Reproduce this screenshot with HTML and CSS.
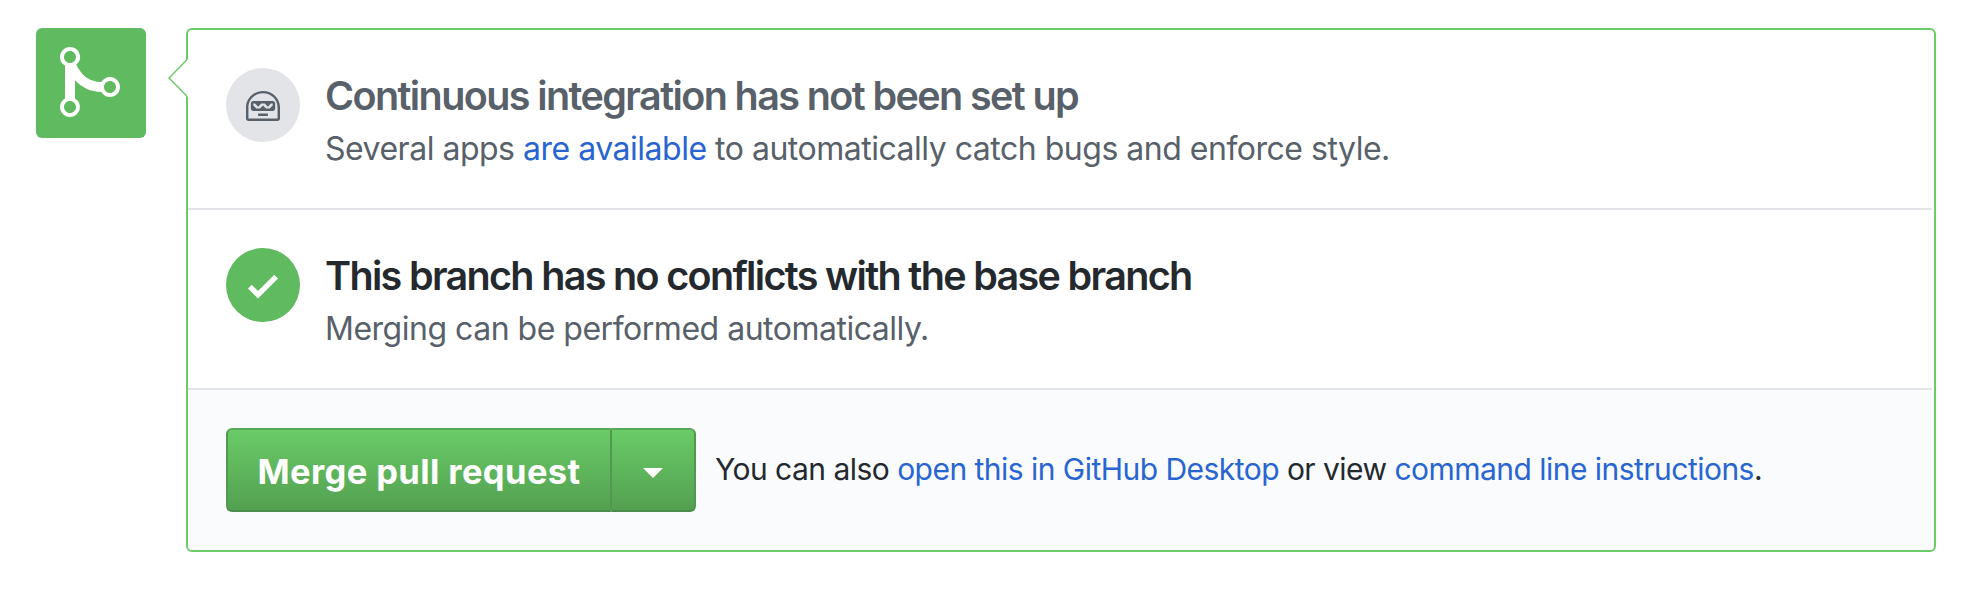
FILE: index.html
```html
<!DOCTYPE html>
<html lang="en">
<head>
<meta charset="utf-8">
<title>Merge pull request</title>
<link rel="stylesheet" href="styles.css">
</head>
<body>
<main class="merge">
  <div class="badge">
    <svg width="60" height="80" viewBox="0 0 12 16" fill="currentColor"><path d="M10 7c-.73 0-1.38.41-1.73 1.02V8C7.22 7.98 6 7.64 5.14 6.98c-.75-.58-1.5-1.61-1.89-2.44A1.993 1.993 0 0 0 2 .99C.89.99 0 1.89 0 3a2 2 0 0 0 1 1.72v6.56c-.59.35-1 .99-1 1.72 0 1.11.89 2 2 2a1.993 1.993 0 0 0 1-3.72V7.67c.67.7 1.44 1.27 2.3 1.69.86.42 2.03.63 2.97.64v-.02c.36.61 1 1.02 1.73 1.02 1.11 0 2-.89 2-2 0-1.11-.89-2-2-2zm-6.8 6c0 .66-.55 1.2-1.2 1.2-.65 0-1.2-.55-1.2-1.2 0-.65.55-1.2 1.2-1.2.65 0 1.2.55 1.2 1.2zM2 4.2C1.34 4.2.8 3.65.8 3c0-.65.55-1.2 1.2-1.2.65 0 1.2.55 1.2 1.2 0 .65-.55 1.2-1.2 1.2zm8 6c-.66 0-1.2-.55-1.2-1.2 0-.65.55-1.2 1.2-1.2.65 0 1.2.55 1.2 1.2 0 .65-.55 1.2-1.2 1.2z"/></svg>
  </div>
  <section class="box">
    <svg class="pointer" width="20" height="38" viewBox="0 0 20 38"><path class="pointer-fill" d="M20 0 1.5 19 20 38z"/><path class="pointer-line" d="M18.8 1 1 19 18.8 37"/></svg>
    <div class="item">
      <span class="status status-muted">
        <svg width="34" height="40" viewBox="0 0 14 16" preserveAspectRatio="none" fill="currentColor"><path d="M3 6c-.55 0-1 .45-1 1v2c0 .55.45 1 1 1h8c.55 0 1-.45 1-1V7c0-.55-.45-1-1-1H3zm8 1.75L9.75 9h-1.5L7 7.75 5.75 9h-1.5L3 7.75V7h.75L5 8.25 6.25 7h1.5L9 8.25 10.25 7H11v.75zM5 11h4v1H5v-1zm2-9C3.14 2 0 4.91 0 8.5V13c0 .55.45 1 1 1h12c.55 0 1-.45 1-1V8.5C14 4.91 10.86 2 7 2zm6 11H1V8.5c0-3.09 2.64-5.59 6-5.59s6 2.5 6 5.59V13z"/></svg>
      </span>
      <div class="copy">
        <h3 class="title title-muted">Continuous integration has not been set up</h3>
        <p class="desc">Several apps <a class="link">are available</a> to automatically catch bugs and enforce style.</p>
      </div>
    </div>
    <div class="item">
      <span class="status status-ok">
        <svg width="30" height="40" viewBox="0 0 12 16" fill="currentColor"><path d="M12 5l-8 8-4-4 1.5-1.5L4 10l6.5-6.5z"/></svg>
      </span>
      <div class="copy">
        <h3 class="title title-branch">This branch has no conflicts with the base branch</h3>
        <p class="desc">Merging can be performed automatically.</p>
      </div>
    </div>
    <div class="actions">
      <div class="btn-group">
        <button class="btn btn-main">Merge pull request</button>
        <button class="btn btn-more" aria-label="Select merge method"><svg width="20" height="10" viewBox="0 0 20 10" fill="currentColor"><path d="M0 0h20L10 10z"/></svg></button>
      </div>
      <p class="alt">You can also <a class="link">open this in GitHub Desktop</a> or view <a class="link">command line instructions</a>.</p>
    </div>
  </section>
</main>
</body>
</html>
```
FILE: styles.css
```css
* { box-sizing: border-box; }

body {
  margin: 0;
  background: #fff;
  color: #24292e;
  font-family: Inter, "Liberation Sans", sans-serif;
}

h3, p { margin: 0; white-space: nowrap; }
svg { display: block; }

.merge {
  display: flex;
  align-items: flex-start;
  gap: 40px;
  padding: 28px 36px;
}

.badge {
  display: flex;
  justify-content: center;
  width: 110px;
  height: 110px;
  padding-top: 14px;
  padding-right: 2px;
  border-radius: 6px;
  background: #60ba5f;
  color: #fff;
}

.box {
  position: relative;
  flex: 1;
  height: 524px;
  padding-right: 2px;
  border: 2px solid #6acb68;
  border-radius: 6px;
}

.pointer {
  position: absolute;
  left: -20px;
  top: 29px;
}
.pointer-fill { fill: #fff; }
.pointer-line { fill: none; stroke: #6acb68; stroke-width: 1.4; }

.item {
  display: flex;
  gap: 25px;
  height: 180px;
  padding: 38px 38px 0;
  border-bottom: 2px solid #e2e4e8;
}

.status {
  display: flex;
  align-items: center;
  justify-content: center;
  width: 74px;
  height: 74px;
  padding-top: 2px;
  border-radius: 50%;
}
.status-muted { background: #e2e4e8; color: #586069; }
.status-ok { background: #60ba5f; color: #fff; }

.title {
  padding-top: 3px;
  font-size: 39.5px;
  font-weight: 600;
  line-height: 50px;
  letter-spacing: -1.6px;
}
.title-muted { color: #586069; }
.title-branch { letter-spacing: -1.67px; }

.desc {
  padding-top: 3px;
  color: #586069;
  font-size: 32px;
  line-height: 50px;
  letter-spacing: -0.49px;
}

.link { color: #2965d1; }

.actions {
  display: flex;
  gap: 19px;
  height: 160px;
  padding: 38px;
  border-bottom-left-radius: 4px;
  background: #fafbfd;
}

.btn-group { display: flex; }

.btn {
  display: flex;
  align-items: center;
  justify-content: center;
  height: 84px;
  padding: 3px 0 0;
  border: 2px solid;
  border-color: #58a957 #529851 #49894a;
  background: linear-gradient(#6acc68, #539f50) border-box;
  color: #fff;
  font: 700 34.5px/50px Inter, "Liberation Sans", sans-serif;
  letter-spacing: 0.4px;
}
.btn-main { width: 386px; border-radius: 6px 0 0 6px; }
.btn-more { width: 84px; padding: 6px 1px 0 0; border-left: 0; border-radius: 0 6px 6px 0; }

.alt {
  padding-top: 16px;
  font-size: 30px;
  line-height: 50px;
  letter-spacing: -0.53px;
}
```
